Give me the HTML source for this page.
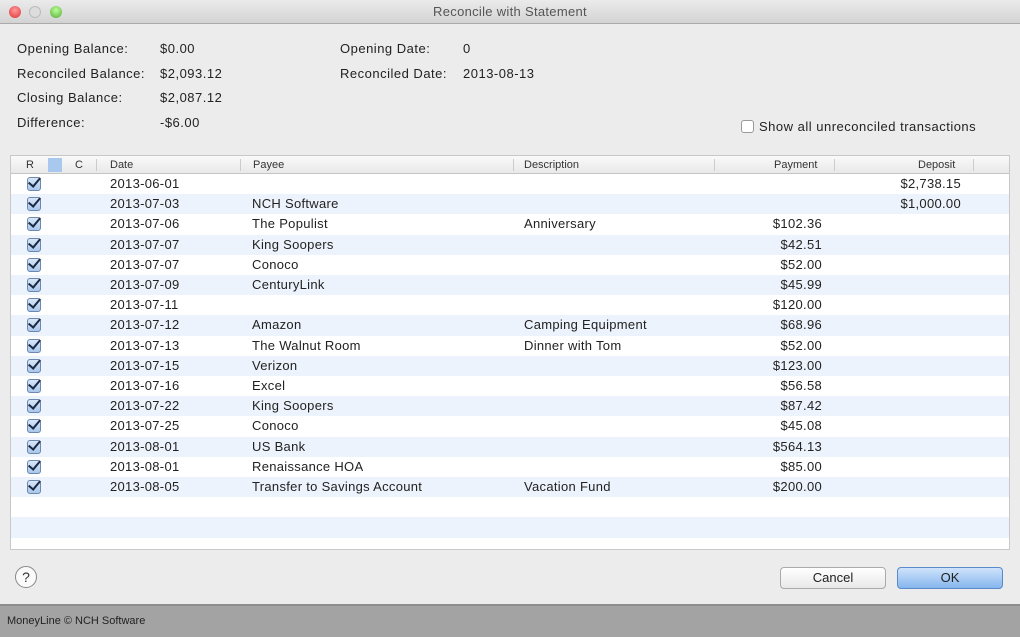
<!DOCTYPE html>
<html><head><style>
*{margin:0;padding:0;box-sizing:border-box}
body{width:1020px;height:637px;overflow:hidden;background:#ececec;font-family:"Liberation Sans",sans-serif;color:#222;position:relative}
.title{position:absolute;left:0;top:0;width:1020px;height:24px;background:linear-gradient(#ebebeb,#d3d3d3);border-bottom:1px solid #aaa;text-align:center;font-size:13px;line-height:24px;color:#555;letter-spacing:0.3px}
.dot{position:absolute;top:6px;width:12px;height:12px;border-radius:50%}
.lbl{position:absolute;font-size:13px;color:#222;letter-spacing:0.5px}
.tbl{position:absolute;left:10px;top:155px;width:1000px;height:395px;background:#fff;border:1px solid #c8c8c8;overflow:hidden}
.hdr{position:absolute;left:0;top:0;width:1000px;height:18px;background:linear-gradient(#fafafa,#e9e9e9);border-bottom:1px solid #c5c5c5;font-size:11px;line-height:18px;color:#333}
.hdr span{position:absolute;top:0}
.sep{position:absolute;top:3px;width:1px;height:12px;background:#ccc}
.row{position:absolute;left:0;width:1000px;height:20.2px;font-size:13px;line-height:20px;letter-spacing:0.3px}
.row span{position:absolute;top:0;white-space:nowrap}
.r{text-align:right}
.cb{position:absolute;left:16px;top:3px;width:14px;height:14px;border:1px solid #6a88b0;border-radius:3px;background:linear-gradient(#d9e7f8,#a9c6ea)}
.cb::after{content:"";position:absolute;left:3px;top:-3px;width:5px;height:10px;border-right:2.5px solid #1b2a44;border-bottom:2.5px solid #1b2a44;transform:rotate(40deg)}
.btn{position:absolute;top:567px;height:22px;border-radius:4px;font-size:13px;text-align:center;line-height:20px}
.foot{position:absolute;left:0;top:604px;width:1020px;height:33px;background:#a3a3a3;border-top:2px solid #8e8e8e;font-size:11px;line-height:31px;padding-left:7px;color:#222}
</style></head><body>
<div class="title">Reconcile with Statement
<div class="dot" style="left:9px;background:radial-gradient(circle at 50% 35%,#f99,#d33)"></div>
<div class="dot" style="left:29px;background:#ddd;border:1px solid #bbb"></div>
<div class="dot" style="left:50px;background:radial-gradient(circle at 50% 35%,#bf9,#5a3)"></div>
</div>
<div class="lbl" style="left:17px;top:41px">Opening Balance:</div><div class="lbl" style="left:160px;top:41px">$0.00</div>
<div class="lbl" style="left:17px;top:66px">Reconciled Balance:</div><div class="lbl" style="left:160px;top:66px">$2,093.12</div>
<div class="lbl" style="left:17px;top:90px">Closing Balance:</div><div class="lbl" style="left:160px;top:90px">$2,087.12</div>
<div class="lbl" style="left:17px;top:115px">Difference:</div><div class="lbl" style="left:160px;top:115px">-$6.00</div>
<div class="lbl" style="left:340px;top:41px">Opening Date:</div><div class="lbl" style="left:463px;top:41px">0</div>
<div class="lbl" style="left:340px;top:66px">Reconciled Date:</div><div class="lbl" style="left:463px;top:66px">2013-08-13</div>
<div style="position:absolute;left:741px;top:120px;width:13px;height:13px;border:1px solid #999;border-radius:3px;background:#fff"></div>
<div class="lbl" style="left:759px;top:119px">Show all unreconciled transactions</div>
<div class="tbl">
<div class="hdr">
<span style="left:15px">R</span><span style="left:37px;top:2px;width:14px;height:14px;background:#a9c8ee"></span><span style="left:64px">C</span><div class="sep" style="left:85px"></div>
<span style="left:99px">Date</span><div class="sep" style="left:229px"></div>
<span style="left:242px">Payee</span><div class="sep" style="left:502px"></div>
<span style="left:513px">Description</span><div class="sep" style="left:703px"></div>
<span style="left:763px">Payment</span><div class="sep" style="left:823px"></div>
<span style="left:907px">Deposit</span><div class="sep" style="left:962px"></div>
</div>
<div id="rows"></div>
</div>
<div style="position:absolute;left:15px;top:566px;width:22px;height:22px;border:1px solid #888;border-radius:50%;background:#fafafa;text-align:center;font-size:14px;line-height:20px;color:#333">?</div>
<div class="btn" style="left:780px;width:106px;border:1px solid #aaa;background:linear-gradient(#fff,#e8e8e8)">Cancel</div>
<div class="btn" style="left:897px;width:106px;border:1px solid #5a8acb;background:linear-gradient(#cfe3fb,#86b6ee)">OK</div>
<div class="foot">MoneyLine © NCH Software</div>
<script>
var d=[["2013-06-01","","","","$2,738.15"],["2013-07-03","NCH Software","","","$1,000.00"],["2013-07-06","The Populist","Anniversary","$102.36",""],["2013-07-07","King Soopers","","$42.51",""],["2013-07-07","Conoco","","$52.00",""],["2013-07-09","CenturyLink","","$45.99",""],["2013-07-11","","","$120.00",""],["2013-07-12","Amazon","Camping Equipment","$68.96",""],["2013-07-13","The Walnut Room","Dinner with Tom","$52.00",""],["2013-07-15","Verizon","","$123.00",""],["2013-07-16","Excel","","$56.58",""],["2013-07-22","King Soopers","","$87.42",""],["2013-07-25","Conoco","","$45.08",""],["2013-08-01","US Bank","","$564.13",""],["2013-08-01","Renaissance HOA","","$85.00",""],["2013-08-05","Transfer to Savings Account","Vacation Fund","$200.00",""]];
var h="";
for(var i=0;i<19;i++){var t=18+i*20.2;var bg=i%2?"#edf3fc":"#fff";h+='<div class="row" style="top:'+t+'px;background:'+bg+'">';
if(i<d.length){var r=d[i];h+='<div class="cb"></div><span style="left:99px">'+r[0]+'</span><span style="left:241px">'+r[1]+'</span><span style="left:513px">'+r[2]+'</span><span class="r" style="right:189px">'+r[3]+'</span><span class="r" style="right:50px">'+r[4]+'</span>';}
h+='</div>';}
document.getElementById("rows").innerHTML=h;
</script>
</body></html>
